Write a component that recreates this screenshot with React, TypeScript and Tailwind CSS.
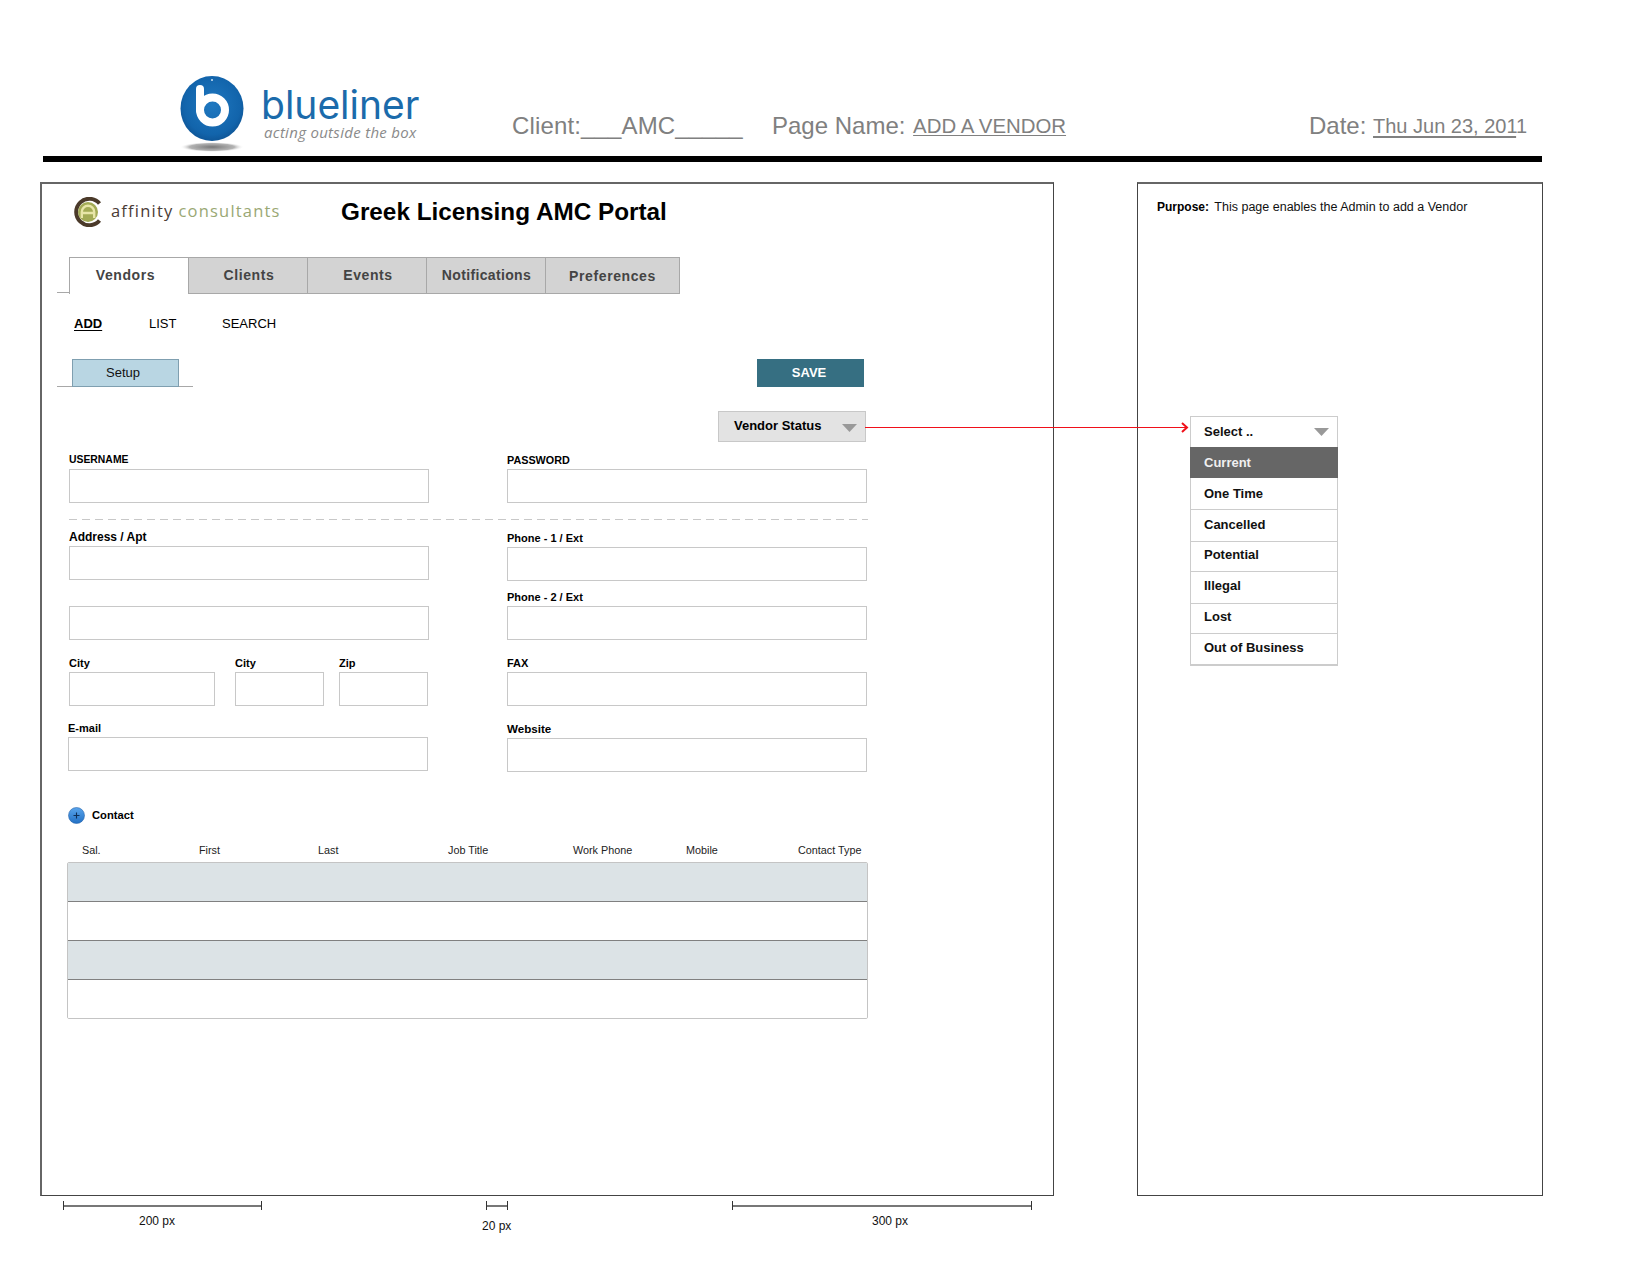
import React from "react";

const Input = ({ w = "w-[360px]", className = "" }: { w?: string; className?: string }) => (
  <input readOnly className={`block ${w} h-[34px] border border-[#c8c8c8] bg-white ${className}`} />
);

const Field = ({ label, w, size = "text-[11px]", className = "" }: { label: string; w?: string; size?: string; className?: string }) => (
  <div className={className}>
    <div className={`h-[14px] mb-[2px] leading-[14px] font-bold text-black whitespace-nowrap ${size}`}>{label}</div>
    <Input w={w} />
  </div>
);

const Triangle = ({ className = "" }: { className?: string }) => (
  <svg width="15" height="8" viewBox="0 0 15 8" className={className}>
    <path d="M0 0H15L7.5 8Z" fill="#999999" />
  </svg>
);

const BluelinerMark = () => (
  <svg width="66" height="78" viewBox="0 0 66 78" className="shrink-0">
    <defs>
      <radialGradient id="ball" cx="50%" cy="45%" r="60%">
        <stop offset="0%" stopColor="#1f78c0" />
        <stop offset="75%" stopColor="#1264ab" />
        <stop offset="100%" stopColor="#0d4f8e" />
      </radialGradient>
      <radialGradient id="shade" cx="50%" cy="50%" r="50%">
        <stop offset="0%" stopColor="#777777" />
        <stop offset="70%" stopColor="#a0a0a0" stopOpacity="0.8" />
        <stop offset="100%" stopColor="#ffffff" stopOpacity="0" />
      </radialGradient>
    </defs>
    <ellipse cx="33" cy="71" rx="32" ry="5" fill="url(#shade)" />
    <ellipse cx="33" cy="32.5" rx="31.5" ry="32.5" fill="url(#ball)" />
    <circle cx="33.5" cy="34" r="12.5" fill="none" stroke="#ffffff" strokeWidth="8" />
    <path d="M21 13V34" stroke="#ffffff" strokeWidth="8" strokeLinecap="round" />
    <circle cx="33" cy="4" r="1" fill="#cfe3f3" />
  </svg>
);

const AffinityMark = () => (
  <svg width="30" height="30" viewBox="0 0 30 30" className="shrink-0">
    <path d="M26.5 6.5A13.2 13.2 0 1 0 26.5 23.5" fill="none" stroke="#4b3a2a" strokeWidth="4" />
    <circle cx="15" cy="15" r="10" fill="#a3ab55" />
    <path d="M8.8 21V15A6.2 6.2 0 0 1 21.2 15V21M8.8 16H21.2" fill="none" stroke="#e8e6a8" strokeWidth="2.4" />
  </svg>
);

const PlusIcon = () => (
  <svg width="17" height="17" viewBox="0 0 17 17" className="shrink-0">
    <defs>
      <linearGradient id="plusBall" x1="0" y1="0" x2="0" y2="1">
        <stop offset="0%" stopColor="#5aa5ec" />
        <stop offset="100%" stopColor="#2270c4" />
      </linearGradient>
    </defs>
    <circle cx="8.5" cy="8.5" r="8" fill="url(#plusBall)" stroke="#2a66ad" strokeWidth="0.6" />
    <path d="M5.5 8.5H11.5M8.5 5.5V11.5" stroke="#0e2f57" strokeWidth="1.1" />
  </svg>
);

const Tab = ({ label, active, className = "" }: { label: string; active?: boolean; className?: string }) => (
  <div
    className={`h-[37px] flex items-center justify-center text-[14px] font-bold text-[#444444] border-t border-[#a8a8a8] ${
      active ? "bg-white border-l border-r" : "bg-[#d3d3d3] border-b border-r border-b-[#a8a8a8]"
    } ${className}`}
  >
    {label}
  </div>
);

const Dim = ({ w, ml, labelMl, labelMt, label }: { w: string; ml: string; labelMl: string; labelMt: string; label: string }) => (
  <div className={`${w} ${ml} shrink-0`}>
    <div className="h-[9px] border-l border-r border-[#333333] flex items-center">
      <div className="w-full h-[2px] bg-[#777777]" />
    </div>
    <div className={`${labelMl} ${labelMt} h-[14px] leading-[14px] text-[12px] text-[#111111] whitespace-nowrap`}>{label}</div>
  </div>
);

const statusRows = [
  { label: "One Time", cls: "h-[32px] border-b border-[#cccccc]" },
  { label: "Cancelled", cls: "h-[32px] pb-[2px] border-b border-[#cccccc]" },
  { label: "Potential", cls: "h-[30px] pb-[4px] border-b border-[#cccccc]" },
  { label: "Illegal", cls: "h-[32px] pb-[4px] border-b border-[#cccccc]" },
  { label: "Lost", cls: "h-[30px] pb-[4px] border-b border-[#cccccc]" },
  { label: "Out of Business", cls: "h-[30px] pb-[3px]" },
];

export default function App() {
  return (
    <div className="relative w-[1650px] h-[1275px] bg-white overflow-hidden font-['Liberation_Sans',Arial,sans-serif]">
      {/* Document header */}
      <div className="flex h-[156px]">
        <div className="ml-[179px] mt-[76px] w-[333px] flex shrink-0">
          <BluelinerMark />
          <div className="ml-[16px]">
            <div className="mt-[9px] h-[40px] leading-[40px] text-[39px] font-['Inter',sans-serif] text-[#1b6bab] whitespace-nowrap">
              blueliner
            </div>
            <div className="-mt-[2px] ml-[3px] h-[18px] leading-[18px] text-[15px] italic tracking-[0.3px] font-['Open_Sans',sans-serif] text-[#8a8a8a] whitespace-nowrap">
              acting outside the box
            </div>
          </div>
        </div>
        <div className="pt-[112px] flex items-baseline text-[#808080] leading-[28px] whitespace-nowrap">
          <div className="w-[260px] text-[24px] tracking-[0.15px]">Client:___AMC_____</div>
          <div className="w-[537px] text-[24px]">
            Page Name: <span className="relative -top-[1px] ml-[1px] text-[20.4px] underline underline-offset-2 decoration-1">ADD A VENDOR</span>
          </div>
          <div className="text-[24px]">
            Date: <span className="relative -top-[1px] text-[20px]"><span className="underline underline-offset-[3px] decoration-2">Thu Jun 23, 201</span>1</span>
          </div>
        </div>
      </div>
      <div className="ml-[43px] w-[1499px] h-[6px] bg-black" />

      {/* Panels */}
      <div className="mt-[20px] ml-[40px] flex">
        <div className="w-[1014px] h-[1014px] border border-[#444444] border-t-2 border-l-2 border-t-[#666666] border-l-[#666666] shrink-0 pl-[27px]">
          <div className="mt-[13px] ml-[4px] h-[30px] flex items-center">
            <div className="w-[268px] flex items-center shrink-0">
              <AffinityMark />
              <span className="ml-[8px] pb-[2px] text-[16.5px] tracking-[1.2px] font-['Open_Sans',sans-serif] text-[#4a3b35] whitespace-nowrap">affinity</span>
              <span className="ml-[5px] pb-[2px] text-[16.5px] tracking-[1.2px] font-['Open_Sans',sans-serif] text-[#9aa874] whitespace-nowrap">consultants</span>
            </div>
            <h1 className="text-[24.3px] font-bold text-black whitespace-nowrap">Greek Licensing AMC Portal</h1>
          </div>

          <div className="mt-[30px] flex items-end">
            <div className="-ml-[12px] w-[12px] h-px bg-[#a8a8a8] mb-px" />
            <Tab label="Vendors" active className="w-[120px] pr-[7px] pb-px tracking-[0.6px]" />
            <Tab label="Clients" className="w-[119px] pl-[2px] tracking-[0.6px]" />
            <Tab label="Events" className="w-[119px] pl-[2px] tracking-[0.6px]" />
            <Tab label="Notifications" className="w-[119px] pl-px tracking-[0.35px]" />
            <Tab label="Preferences" className="w-[134px] pt-[2px] tracking-[0.6px]" />
          </div>

          <div className="mt-[22px] ml-[5px] flex h-[16px] leading-[16px] text-[13px] text-black">
            <span className="w-[75px] font-bold"><span className="underline underline-offset-2">ADD</span></span>
            <span className="w-[73px]">LIST</span>
            <span>SEARCH</span>
          </div>

          <div className="mt-[27px] w-[795px] flex items-start">
            <div className="-ml-[12px] w-[136px] h-[28px] pl-[15px] border-b border-[#a8a8a8]">
              <div className="w-[107px] h-[28px] pr-[5px] flex items-center justify-center bg-[#b9d6e3] border border-[#7f9fb0] text-[13px] text-[#111111]">
                Setup
              </div>
            </div>
            <button className="ml-auto w-[107px] h-[28px] pr-[3px] bg-[#366f82] text-white text-[13px] font-bold">SAVE</button>
          </div>

          <div className="mt-[24px] ml-[649px] w-[148px] h-[31px] pb-[2px] flex items-center bg-[#e3e3e3] border border-[#c8c8c8] text-[13px] font-bold text-black">
            <span className="ml-[15px]">Vendor Status</span>
            <Triangle className="ml-auto mr-[8px] mt-[5px]" />
          </div>

          <div className="mt-[11px] flex">
            <Field label="USERNAME" size="text-[10.4px]" />
            <Field label="PASSWORD" size="text-[10.8px]" className="ml-[78px]" />
          </div>

          <div className="mt-[16px] w-[799px] h-px bg-[repeating-linear-gradient(90deg,#c8c8c8_0_8px,transparent_8px_13px)]" />

          <div className="flex">
            <div className="w-[360px] shrink-0">
              <Field label="Address / Apt" size="text-[12px]" className="mt-[10px]" />
              <Input className="mt-[26px]" />
            </div>
            <div className="ml-[78px] w-[360px] shrink-0">
              <Field label="Phone - 1 / Ext" className="mt-[11px]" />
              <Field label="Phone - 2 / Ext" className="mt-[9px]" />
            </div>
          </div>

          <div className="flex">
            <div className="w-[360px] shrink-0">
              <div className="mt-[16px] flex">
                <Field label="City" w="w-[146px]" />
                <Field label="City" w="w-[89px]" className="ml-[20px]" />
                <Field label="Zip" w="w-[89px]" className="ml-[15px]" />
              </div>
              <Field label="E-mail" className="mt-[15px] -ml-px" />
            </div>
            <div className="ml-[78px] w-[360px] shrink-0">
              <Field label="FAX" className="mt-[16px]" />
              <Field label="Website" size="text-[11.6px]" className="mt-[16px]" />
            </div>
          </div>

          <div className="mt-[35px] -ml-[1px] flex items-center h-[17px]">
            <PlusIcon />
            <span className="ml-[7px] text-[11.2px] font-bold text-black">Contact</span>
          </div>

          <div className="mt-[19px] -ml-[2px] w-[801px] h-[14px] leading-[14px] pl-[15px] grid grid-cols-[117px_119px_130px_125px_113px_112px_64px] text-[10.8px] text-[#222222] whitespace-nowrap">
            <span>Sal.</span>
            <span>First</span>
            <span>Last</span>
            <span>Job Title</span>
            <span>Work Phone</span>
            <span>Mobile</span>
            <span>Contact Type</span>
          </div>

          <div className="mt-[5px] -ml-[2px] w-[801px] border border-[#c4c4c4] rounded-[2px] overflow-hidden">
            <div className="h-[39px] bg-[#dce3e6] border-b border-[#808080]" />
            <div className="h-[39px] bg-white border-b border-[#808080]" />
            <div className="h-[39px] bg-[#dce3e6] border-b border-[#808080]" />
            <div className="h-[38px] bg-white" />
          </div>
        </div>

        <div className="ml-[83px] w-[406px] h-[1014px] border border-[#444444] border-t-2 border-t-[#666666] shrink-0">
          <p className="mt-[15px] ml-[19px] h-[16px] leading-[16px] text-[12px] text-black whitespace-nowrap">
            <b>Purpose:</b> <span className="ml-[2px] text-[12.5px] text-[#111111]">This page enables the Admin to add a Vendor</span>
          </p>
          <div className="mt-[201px] ml-[52px] w-[148px] border border-[#cccccc] border-b-2 text-[13px] font-bold text-[#111111]">
            <div className="h-[30px] flex items-center pl-[13px] pr-[8px]">
              <span>Select ..</span>
              <Triangle className="ml-auto" />
            </div>
            <div className="h-[31px] flex items-center pl-[13px] -mx-px bg-[#666666] text-[#f0f0f0]">
              <span className="ml-px">Current</span>
            </div>
            {statusRows.map((row) => (
              <div key={row.label} className={`flex items-center pl-[13px] ${row.cls}`}>
                {row.label}
              </div>
            ))}
          </div>
        </div>
      </div>

      {/* Measurement rulers */}
      <div className="mt-[5px] flex">
        <Dim w="w-[199px]" ml="ml-[63px]" labelMl="ml-[76px]" labelMt="mt-[4px]" label="200 px" />
        <Dim w="w-[22px]" ml="ml-[224px]" labelMl="-ml-[4px]" labelMt="mt-[9px]" label="20 px" />
        <Dim w="w-[300px]" ml="ml-[224px]" labelMl="ml-[140px]" labelMt="mt-[4px]" label="300 px" />
      </div>

      {/* Annotation arrow lying over both panels */}
      <svg width="325" height="12" viewBox="0 0 325 12" className="absolute left-[865px] top-[421px]">
        <path d="M0 6.5H321" stroke="#f0101a" strokeWidth="1" />
        <path d="M317 2L322 6.5L317 11" fill="none" stroke="#f0101a" strokeWidth="2" />
      </svg>
    </div>
  );
}
